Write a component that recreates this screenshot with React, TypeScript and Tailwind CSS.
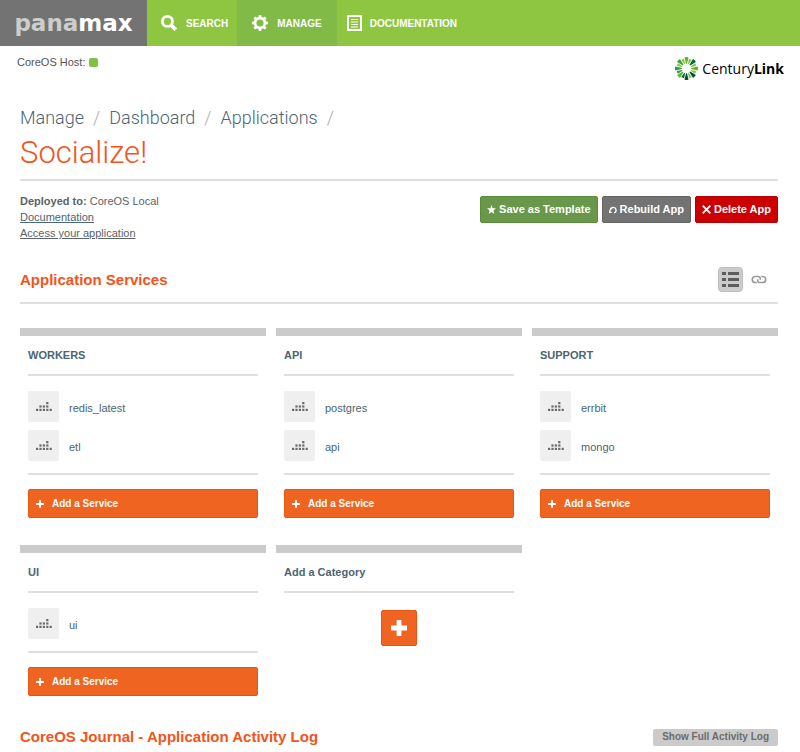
const CATEGORIES = [
  { name: "WORKERS", services: ["redis_latest", "etl"] },
  { name: "API", services: ["postgres", "api"] },
  { name: "SUPPORT", services: ["errbit", "mongo"] },
  { name: "UI", services: ["ui"] },
]

const CRUMBS = ["Manage", "Dashboard", "Applications"]

// clockwise from the top
const RAY_COLORS = [
  "#5cb531", "#8dc63f", "#00653a", "#8dc63f", "#5cb531", "#8dc63f", "#00502f", "#8dc63f",
  "#00502f", "#00653a", "#5cb531", "#2e9a47", "#2e9a47", "#8dc63f", "#3fa535", "#8dc63f",
]

// pairs of [column, row] in the service glyph
const DOTS = [
  [0, 2], [1, 2], [2, 2], [3, 2], [4, 2],
  [1, 1], [2, 1], [3, 1],
  [3, 0],
]

function SearchIcon() {
  return (
    <svg width="16" height="16" viewBox="0 0 16 16" fill="none" stroke="#fff" aria-hidden="true">
      <circle cx="6.4" cy="6.4" r="5" strokeWidth="2.8" />
      <path d="M10 10l4.8 4.8" strokeWidth="3.8" />
    </svg>
  )
}

function GearIcon() {
  return (
    <svg width="16" height="16" viewBox="0 0 16 16" aria-hidden="true">
      <circle cx="8" cy="8" r="4.9" fill="none" stroke="#fff" strokeWidth="2.6" />
      {[0, 45, 90, 135, 180, 225, 270, 315].map(a => (
        <path key={a} d="M6.4 2.6L6.8 0h2.4l.4 2.6z" fill="#fff" transform={`rotate(${a} 8 8)`} />
      ))}
    </svg>
  )
}

function DocIcon() {
  return (
    <svg width="15" height="16" viewBox="0 0 15 16" fill="none" stroke="#fff" aria-hidden="true">
      <path d="M1 1h13v14H1z" strokeWidth="2" />
      <path d="M4 4.5h7M4 7h7M4 9.5h7M4 12h7" strokeWidth="1.2" />
    </svg>
  )
}

function PlusIcon({ size }: { size: number }) {
  return (
    <svg width={size} height={size} viewBox="0 0 8 8" fill="none" stroke="currentColor" aria-hidden="true">
      <path d="M4 0v8M0 4h8" strokeWidth={size > 10 ? 2.4 : 1.8} />
    </svg>
  )
}

function Burst() {
  return (
    <svg width="23" height="23" viewBox="0 0 23 23" aria-hidden="true">
      {RAY_COLORS.map((color, i) => (
        <path
          key={i}
          d={i % 2 ? "M11.1 6.8L10 1.6q1.5-.4 3 0l-1.1 5.2z" : "M11 6.8L9.5.2q2-.4 4 0L12 6.8z"}
          fill={color}
          transform={`rotate(${i * 22.5} 11.5 11.5)`}
        />
      ))}
    </svg>
  )
}

function ServiceGlyph() {
  return (
    <svg width="16" height="10" viewBox="0 0 16 10" fill="#6b6b6b" aria-hidden="true">
      {DOTS.map(([c, r]) => (
        <rect key={`${c}-${r}`} x={c * 3.4} y={r * 3.4} width="2.2" height="2.2" />
      ))}
    </svg>
  )
}

function Panel({ title, children }: { title: string; children: React.ReactNode }) {
  return (
    <section className="border-t-8 border-[#cbcbcb] px-2">
      <h3 className="border-b-2 border-[#dfdfdf] py-[11px] text-[11px] leading-4 font-bold text-[#4b6573]">{title}</h3>
      {children}
    </section>
  )
}

export default function App() {
  return (
    <div className="min-h-screen bg-white font-['Liberation_Sans',Arial,sans-serif] text-[#5c6366]">
      <header className="flex h-[46px] bg-[#8ec641] text-white">
        <a
          href="#home"
          className="flex w-[147px] items-center justify-center bg-[#737373] font-['DejaVu_Sans',sans-serif] text-[23px] leading-none font-bold text-[#cdcdcd]"
        >
          pana<span className="text-white">max</span>
        </a>
        <nav className="flex text-[10px] font-bold">
          <a href="#search" className="flex items-center gap-[9px] pr-[9px] pl-[14px]"><SearchIcon />SEARCH</a>
          <a href="#manage" className="flex items-center gap-[9px] bg-[#82ba47] px-[15px]"><GearIcon />MANAGE</a>
          <a href="#docs" className="flex items-center gap-2 px-[10px]"><DocIcon />DOCUMENTATION</a>
        </nav>
      </header>

      <div className="flex items-start justify-between pr-4 pl-[17px]">
        <p className="flex items-center gap-1 pt-2 text-[11px] leading-4 text-[#555]">
          CoreOS Host: <span className="size-[9px] rounded-xs bg-[#82bf45]" />
        </p>
        <a href="#centurylink" className="flex items-center gap-1 pt-[11px] font-['Open_Sans',sans-serif] text-[14px] leading-[23px] text-black">
          <Burst />
          <span>Century<b>Link</b></span>
        </a>
      </div>

      <main className="pr-[22px] pl-5">
        <div className="border-b-2 border-[#dfdfdf] pt-6 pb-2 font-['Roboto',sans-serif] font-light">
          <nav className="flex gap-[9px] text-[18px] leading-7 text-[#4b6573]">
            {CRUMBS.map(crumb => (
              <span key={crumb} className="flex gap-[9px]">
                <a href={`#${crumb}`}>{crumb}</a>
                <span className="text-[#aaa]">/</span>
              </span>
            ))}
          </nav>
          <h1 className="pt-[3px] text-[31px] leading-9 text-[#f2541b]">Socialize!</h1>
        </div>

        <div className="flex items-start justify-between pt-3">
          <div className="text-[11px] leading-4">
            <p><b>Deployed to:</b> CoreOS Local</p>
            <p><a href="#documentation" className="text-[#4b6573] underline">Documentation</a></p>
            <p><a href="#access" className="underline">Access your application</a></p>
          </div>
          <div className="flex gap-1 pt-[3px] text-[11px] font-bold text-white">
            <button className="flex h-[27px] items-center gap-[3px] rounded-xs border border-[#5a8c3a] bg-[#69984a] px-[6px]">
              <svg width="9" height="9" viewBox="0 0 16 16" fill="#fff" aria-hidden="true">
                <path d="M8 0l2.1 5.6 5.9.3-4.6 3.7L13 16l-5-3.5L3 16l1.6-6.4L0 5.9l5.9-.3z" />
              </svg>
              Save as Template
            </button>
            <button className="flex h-[27px] items-center gap-[3px] rounded-xs border border-[#636363] bg-[#737373] px-[6px]">
              <svg width="8" height="8" viewBox="0 0 8 8" fill="none" stroke="#fff" strokeWidth="1.4" aria-hidden="true">
                <path d="M1.5 4.6A2.8 2.8 0 1 1 5 6.9" />
                <path d="M0 3.8v3.2h3.2z" fill="#fff" stroke="none" />
              </svg>
              Rebuild App
            </button>
            <button className="flex h-[27px] items-center gap-[3px] rounded-xs border border-[#b80000] bg-[#cc0000] px-[6px]">
              <svg width="9" height="9" viewBox="0 0 8 8" fill="none" stroke="#fff" strokeWidth="1.6" aria-hidden="true">
                <path d="M.6.6l6.8 6.8M7.4.6L.6 7.4" />
              </svg>
              Delete App
            </button>
          </div>
        </div>

        <div className="flex items-center justify-between border-b-2 border-[#dfdfdf] pt-[26px] pb-[10px]">
          <h2 className="text-[15px] leading-6 font-bold text-[#f2541b]">Application Services</h2>
          <div className="flex items-center gap-2 pr-[11px]">
            <button aria-label="List view" className="flex size-[25px] items-center justify-center rounded-sm border border-[#bfbfbf] bg-[#cbcbcb]">
              <svg width="17" height="15" viewBox="0 0 17 15" fill="#5c5c5c" aria-hidden="true">
                {[0, 6, 12].map(y => (
                  <g key={y}>
                    <rect x="0" y={y} width="4" height="3" />
                    <rect x="6" y={y} width="11" height="3" />
                  </g>
                ))}
              </svg>
            </button>
            <button aria-label="Link view">
              <svg width="16" height="9" viewBox="0 0 17 10" fill="none" stroke="#9b9b9b" strokeWidth="1.8" aria-hidden="true">
                <path d="M6 8.4H4.4a3.4 3.4 0 0 1 0-6.8h3a2.6 2.6 0 0 1 2.6 2.6v1" />
                <path d="M11 1.6h1.6a3.4 3.4 0 0 1 0 6.8h-3A2.6 2.6 0 0 1 7 5.8v-1" />
              </svg>
            </button>
          </div>
        </div>

        <div className="grid grid-cols-3 gap-x-[10px] gap-y-[27px] pt-6">
          {CATEGORIES.map(category => (
            <Panel key={category.name} title={category.name}>
              <ul className="space-y-2 border-b-2 border-[#dfdfdf] pt-[15px] pb-3">
                {category.services.map(service => (
                  <li key={service} className="flex items-center gap-[10px] text-[11px]">
                    <span className="flex size-[31px] items-center justify-center rounded-xs bg-[#efefef]"><ServiceGlyph /></span>
                    <a href={`#${service}`} className="pt-1 text-[#4b6573]">{service}</a>
                  </li>
                ))}
              </ul>
              <button className="mt-[14px] flex h-[29px] w-full items-center gap-2 rounded-xs border border-[#ea5410] bg-[#f06422] px-[7px] text-[10px] font-bold text-white">
                <PlusIcon size={8} />
                Add a Service
              </button>
            </Panel>
          ))}
          <Panel title="Add a Category">
            <button
              aria-label="Add a Category"
              className="mx-auto mt-[17px] flex size-9 items-center justify-center rounded-xs border border-[#ea5410] bg-[#f06422] text-white"
            >
              <PlusIcon size={16} />
            </button>
          </Panel>
        </div>

        <div className="flex items-center justify-between pt-[29px]">
          <h2 className="text-[15px] leading-6 font-bold text-[#f2541b]">CoreOS Journal - Application Activity Log</h2>
          <button className="h-[17px] rounded-xs bg-[#cbcbcb] px-[9px] text-[10px] leading-none font-bold text-[#6b6b6b]">Show Full Activity Log</button>
        </div>
      </main>
    </div>
  )
}
